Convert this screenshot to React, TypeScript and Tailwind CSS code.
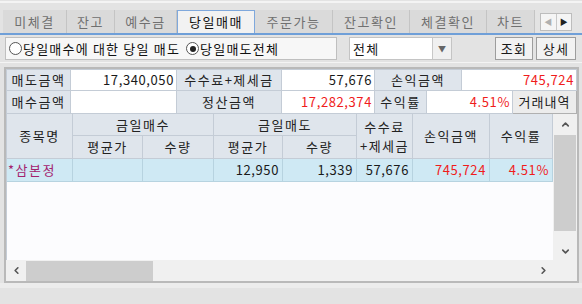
import React from "react";
import { ChevronUp, ChevronDown, ChevronLeft, ChevronRight } from "lucide-react";

const font = { fontFamily: '"Noto Sans CJK KR", "Noto Sans", sans-serif' };

const tabs = [
  { label: "미체결", w: "w-[64px]" },
  { label: "잔고", w: "w-[48px]" },
  { label: "예수금", w: "w-[62px]" },
  { label: "당일매매", w: "w-[78px]", active: true },
  { label: "주문가능", w: "w-[78px]" },
  { label: "잔고확인", w: "w-[77px]" },
  { label: "체결확인", w: "w-[77px]" },
  { label: "차트", w: "w-[48px]" },
];

const Label = ({ children, className = "" }: { children: React.ReactNode; className?: string }) => (
  <div
    className={`flex items-center justify-center bg-[#dfe5ec] border-r border-b border-[#c4ccd6] text-[13px] tracking-[1.5px] text-[#222] ${className}`}
  >
    {children}
  </div>
);

const Value = ({ children, className = "" }: { children?: React.ReactNode; className?: string }) => (
  <div
    className={`flex items-center justify-end pr-[2px] bg-white border-r border-b border-[#c4ccd6] text-[13px] tracking-[0.6px] ${className}`}
  >
    {children}
  </div>
);

const Hd = ({ children, className = "" }: { children: React.ReactNode; className?: string }) => (
  <div
    className={`flex flex-col items-center justify-center text-center bg-[#dfe5ec] border-r border-b border-[#c4ccd6] text-[13px] tracking-[1.5px] text-[#222] ${className}`}
  >
    {children}
  </div>
);

const Cell = ({ children, className = "" }: { children?: React.ReactNode; className?: string }) => (
  <div
    className={`flex items-center justify-end pr-[3px] bg-[#cfe9f4] border-r border-b border-[#b7d3e0] text-[13px] tracking-[0.6px] ${className}`}
  >
    {children}
  </div>
);

export default function App() {
  return (
    <div className="w-[582px] h-[304px] bg-[#e3e3e3] overflow-hidden text-[#1a1a1a]" style={font}>
      <div className="h-[9px] border-t-[2px] border-t-[#f4f4f4] mt-[1px]" />
      {/* tabs */}
      <div className="flex h-[25px] pl-[3px] border-b-[2px] border-[#6f9fd8]">
        {tabs.map((t) =>
          t.active ? (
            <div
              key={t.label}
              className={`${t.w} flex items-center justify-center bg-[#f2f2f2] border border-b-0 border-[#7fa8dc] text-[13px] tracking-[1.5px] text-[#111]`}
            >
              {t.label}
            </div>
          ) : (
            <div
              key={t.label}
              className={`${t.w} flex items-center justify-center bg-[#dadada] border-r border-[#c4c4c4] text-[13px] tracking-[1.5px] text-[#707070]`}
            >
              {t.label}
            </div>
          )
        )}
        <div className="ml-[5px] mt-[3px] w-[32px] h-[18px] flex border border-[#bdbdbd] bg-[#f5f5f5]">
          <div className="flex-1 flex items-center justify-center border-r border-[#c8c8c8] text-[8px] text-[#b0b0b0]">◀</div>
          <div className="flex-1 flex items-center justify-center text-[8px] text-[#222]">▶</div>
        </div>
      </div>
      {/* toolbar */}
      <div className="flex h-[23px] mt-[2px] items-stretch">
        <div className="ml-[5px] w-[332px] flex items-center gap-[6px] bg-[#f7f7f7] border border-[#bfbfbf] px-[3px] text-[13px] tracking-[1.2px] text-[#111]">
          <span className="flex items-center">
            <span className="inline-block w-[13px] h-[13px] rounded-full border border-[#555] bg-white mr-[1px]" />
            당일매수에 대한 당일 매도
          </span>
          <span className="flex items-center">
            <span className="inline-flex items-center justify-center w-[13px] h-[13px] rounded-full border border-[#555] bg-white mr-[1px]">
              <span className="w-[6px] h-[6px] rounded-full bg-[#222]" />
            </span>
            당일매도전체
          </span>
        </div>
        <div className="ml-[12px] w-[103px] flex bg-white border border-[#c4c4c4]">
          <div className="flex-1 flex items-center pl-[3px] text-[13px] tracking-[1.2px]">전체</div>
          <div className="w-[19px] flex items-center justify-center bg-[#f0f0f0] border-l border-[#c8c8c8] text-[8px] text-[#666]">▼</div>
        </div>
        <div className="ml-auto flex gap-[3px] mr-[6px]">
          <div className="w-[38px] flex items-center justify-center bg-[#f2f2f2] border border-[#9d9d9d] text-[13px] tracking-[1.2px]">조회</div>
          <div className="w-[40px] flex items-center justify-center bg-[#f2f2f2] border border-[#9d9d9d] text-[13px] tracking-[1.2px]">상세</div>
        </div>
      </div>
      <div className="h-[5px] mt-[2px] border-t border-[#f4f4f4]" />
      {/* panel */}
      <div className="ml-[4px] mr-[3px] border-[2px] border-[#b9b9b9] bg-[#f0f0f0] h-[216px] flex flex-col">
        {/* summary */}
        <div className="flex h-[22px] border-t border-[#c4ccd6] border-l">
          <Label className="w-[64px]">매도금액</Label>
          <Value className="w-[106px]">17,340,050</Value>
          <Label className="w-[105px]">수수료+제세금</Label>
          <Value className="w-[93px]">57,676</Value>
          <Label className="w-[87px]">손익금액</Label>
          <Value className="flex-1 text-[#f01c1c]">745,724</Value>
        </div>
        <div className="flex h-[23px] border-l border-[#c4ccd6]">
          <Label className="w-[64px]">매수금액</Label>
          <Value className="w-[106px]" />
          <Label className="w-[105px]">정산금액</Label>
          <Value className="w-[93px] text-[#f01c1c]">17,282,374</Value>
          <Label className="w-[52px]">수익률</Label>
          <Value className="w-[86px] text-[#f01c1c]">4.51%</Value>
          <div className="flex-1 flex items-center justify-center bg-[#ececec] border-r border-b border-[#b0b0b0] text-[13px] tracking-[1px]">
            거래내역
          </div>
        </div>
        {/* grid */}
        <div className="flex flex-1">
          <div className="w-[547px] flex flex-col">
            <div className="flex-1 bg-[#fcfcfe] flex flex-col border-l border-[#c4ccd6]">
              <div className="grid grid-cols-[66px_70px_71px_69px_74px_56px_77px_63px] grid-rows-[22px_23px_23px]">
                <Hd className="row-span-2">종목명</Hd>
                <Hd className="col-span-2">금일매수</Hd>
                <Hd className="col-span-2">금일매도</Hd>
                <Hd className="row-span-2 tracking-[0.5px]">
                  <span className="leading-[19px]">수수료</span>
                  <span className="leading-[19px]">+제세금</span>
                </Hd>
                <Hd className="row-span-2">손익금액</Hd>
                <Hd className="row-span-2 bg-[#c9def2]">수익률</Hd>
                <Hd>평균가</Hd>
                <Hd>수량</Hd>
                <Hd>평균가</Hd>
                <Hd>수량</Hd>
                <Cell className="justify-start pl-[1px] text-[#a3226e] tracking-[1.5px]">*삼본정</Cell>
                <Cell />
                <Cell />
                <Cell>12,950</Cell>
                <Cell>1,339</Cell>
                <Cell>57,676</Cell>
                <Cell className="text-[#f01c1c]">745,724</Cell>
                <Cell className="text-[#f01c1c]">4.51%</Cell>
              </div>
            </div>
            {/* horizontal scrollbar */}
            <div className="h-[21px] flex items-center bg-[#f0f0f0]">
              <div className="w-[20px] flex justify-center text-[#555]">
                <ChevronLeft size={11} strokeWidth={3.5} />
              </div>
              <div className="w-[127px] h-[20px] bg-[#cdcdcd]" />
              <div className="flex-1" />
              <div className="w-[20px] flex justify-center text-[#555]">
                <ChevronRight size={11} strokeWidth={3.5} />
              </div>
            </div>
          </div>
          {/* vertical scrollbar */}
          <div className="flex-1 flex flex-col bg-[#f0f0f0]">
            <div className="h-[21px] flex items-center justify-center text-[#555]">
              <ChevronUp size={11} strokeWidth={3.5} />
            </div>
            <div className="h-[96px] mx-[1px] bg-[#cdcdcd]" />
            <div className="flex-1" />
            <div className="h-[18px] flex items-center justify-center text-[#555]">
              <ChevronDown size={11} strokeWidth={3.5} />
            </div>
            <div className="h-[21px]" />
          </div>
        </div>
      </div>
      <div className="h-[5px] bg-[#ececec]" />
    </div>
  );
}
